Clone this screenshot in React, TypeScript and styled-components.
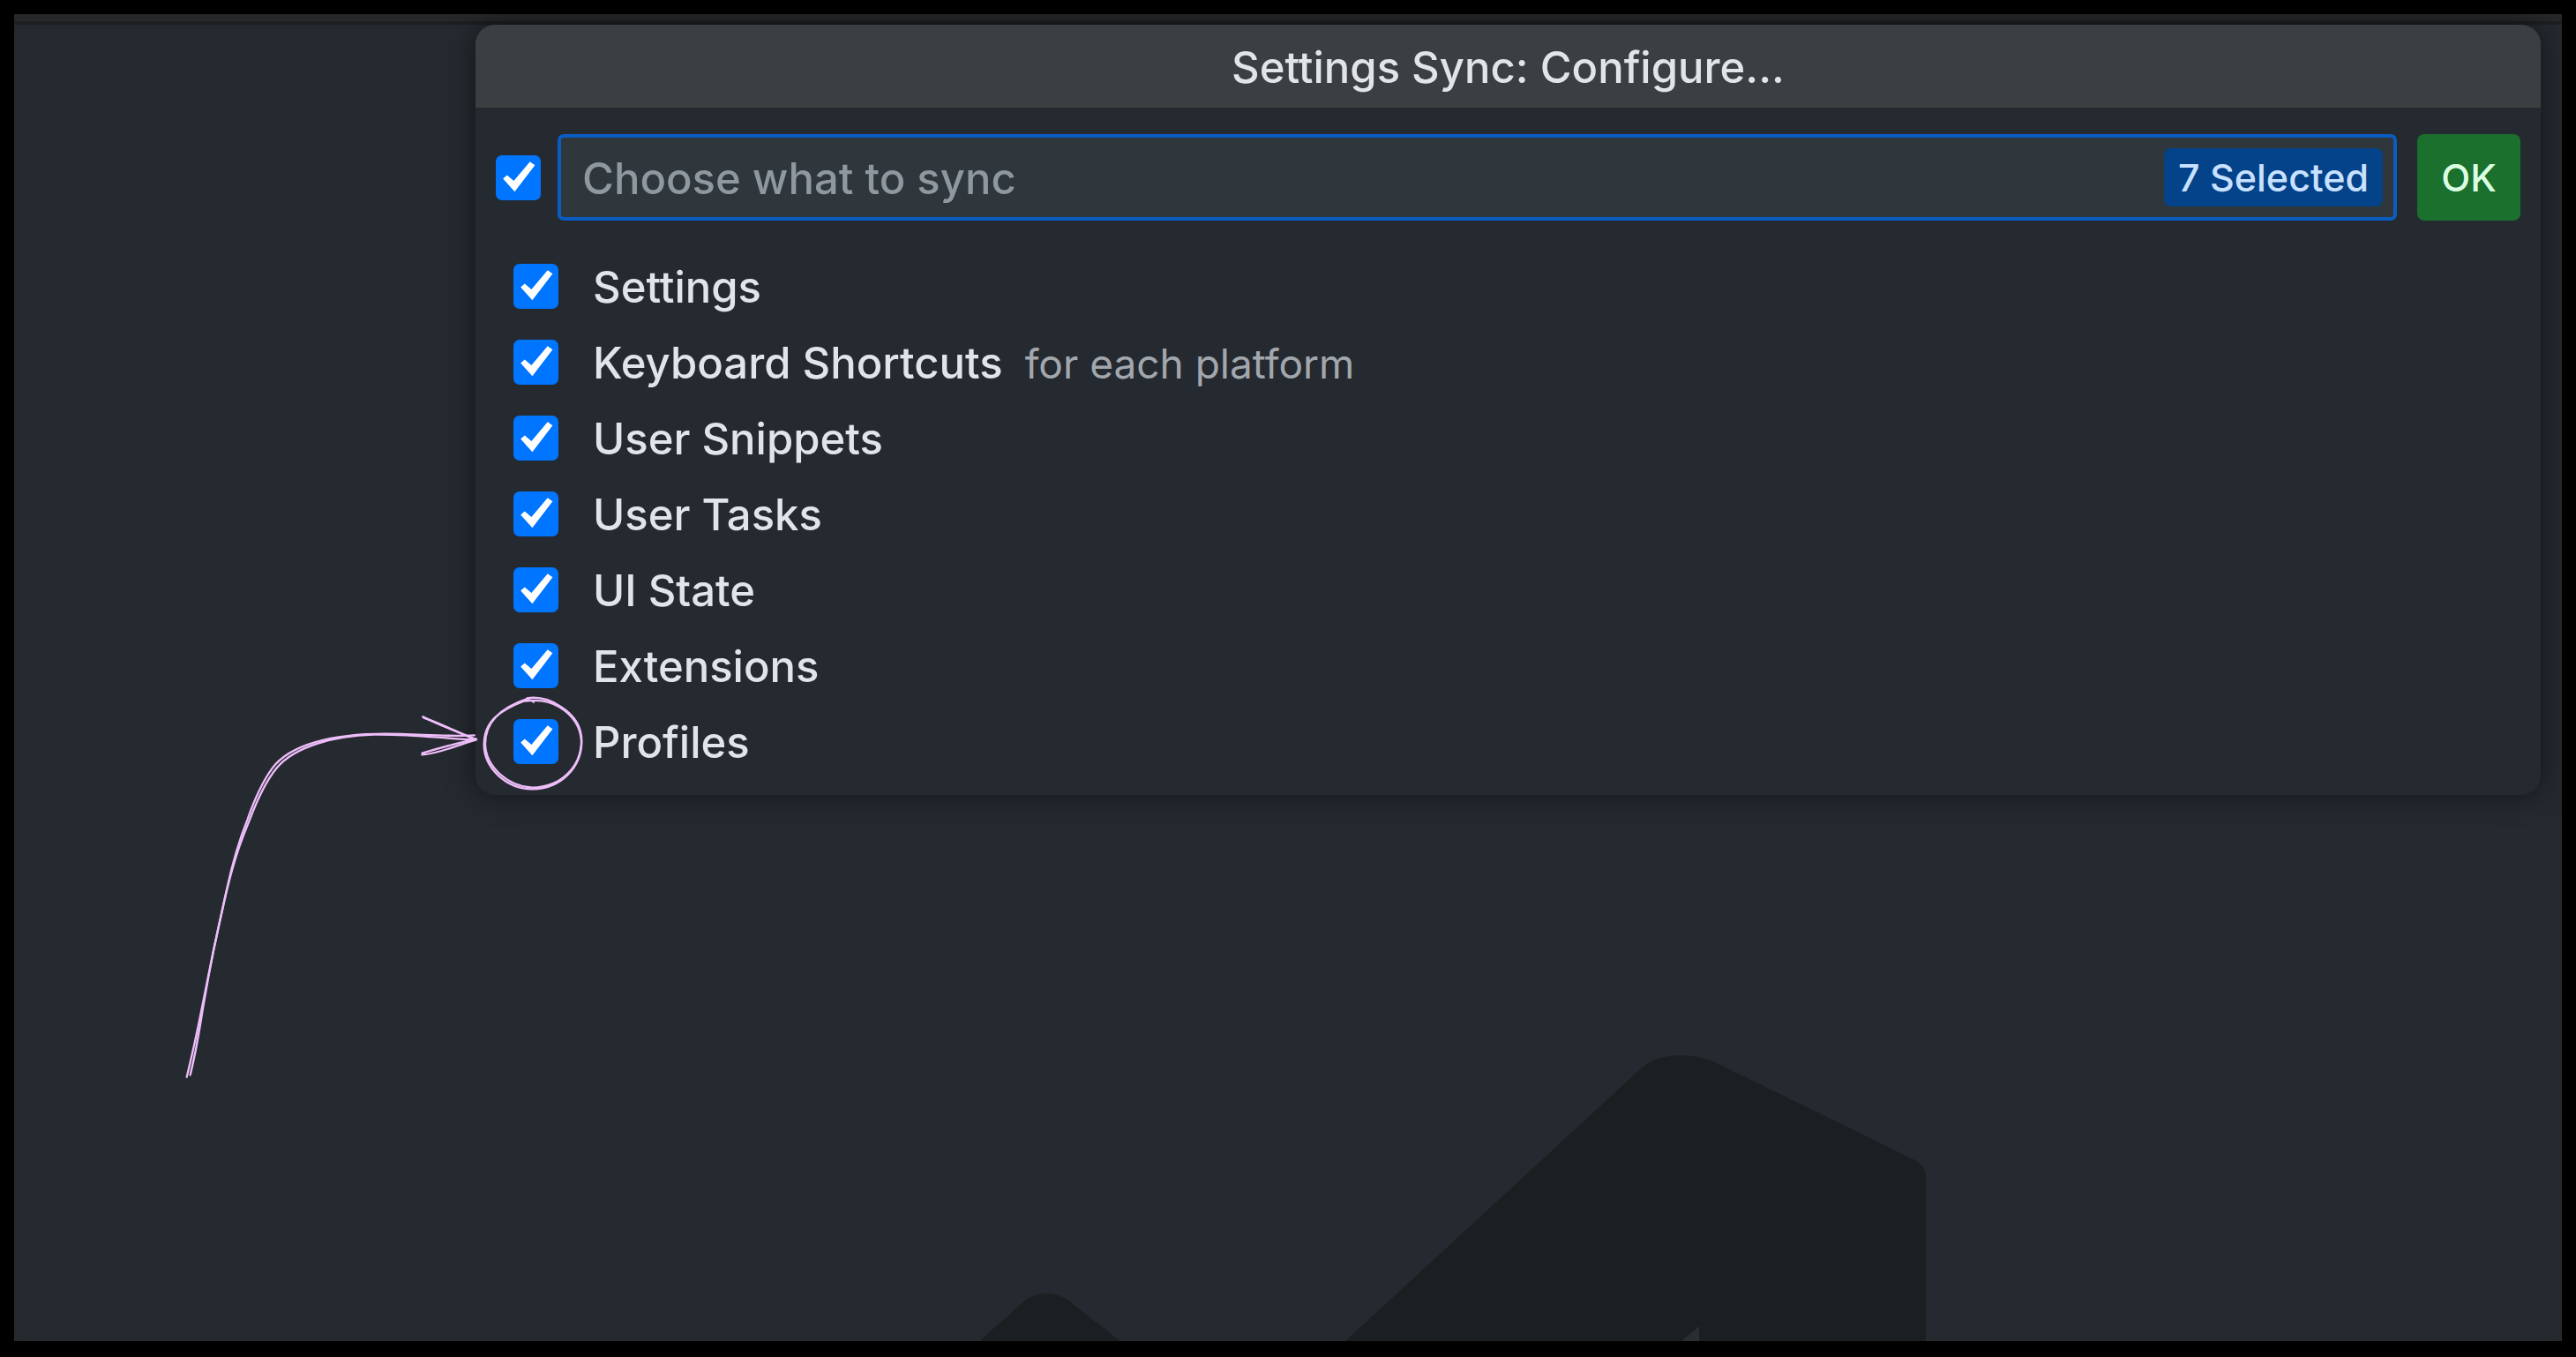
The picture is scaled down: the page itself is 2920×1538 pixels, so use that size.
import React, { useState } from "react";
import styled, { createGlobalStyle } from "styled-components";

const color = {
  editor: "#252a30",
  strip: "#262829",
  line: "#1c2023",
  title: "#3c3f41",
  text: "#e1e4e8",
  muted: "#a2a7ad",
  placeholder: "#8f979f",
  field: "#2f363c",
  focus: "#0a5cc2",
  badge: "#044289",
  badgeText: "#c8e1ff",
  button: "#1a702c",
  buttonText: "#dcffe4",
  accent: "#0075ff",
  ink: "#eebefa",
  watermark: "#1b1f21",
};

const GlobalStyle = createGlobalStyle`
  * { box-sizing: border-box; }
  body { margin: 0; background: #000; }
  body, input, button { font-family: Inter, "Liberation Sans", sans-serif; }
`;

const Frame = styled.main`
  position: relative;
  display: flex;
  flex-direction: column;
  min-height: 100vh;
  overflow: hidden;
  border: 16px solid #000;
  border-bottom-width: 18px;
  background: ${color.editor};
  box-shadow: inset 0 0 12px #292b2c;
`;

const TabStrip = styled.div`
  height: 12px;
  border-bottom: 4px solid ${color.line};
  background: ${color.strip};
`;

const Picker = styled.form`
  position: relative;
  margin: 0 24px 0 523px;
  padding-bottom: 18px;
  border-radius: 22px;
  background: ${color.editor};
  box-shadow: 0 0 32px rgba(0, 0, 0, 0.5);
  color: ${color.text};
`;

const Title = styled.h1`
  margin: 0;
  padding-top: 4px;
  border-radius: 22px 22px 0 0;
  background: ${color.title};
  font-size: 49px;
  font-weight: 500;
  line-height: 90px;
  text-align: center;
`;

const Header = styled.div`
  display: flex;
  align-items: center;
  padding: 30px 23px 31px;
`;

const Field = styled.div`
  display: flex;
  flex: 1;
  align-items: center;
  height: 98px;
  margin: 0 23px 0 19px;
  padding: 0 12px 0 24px;
  border: 4px solid ${color.focus};
  border-radius: 7px;
  background: ${color.field};
`;

const SearchInput = styled.input`
  flex: 1;
  min-width: 0;
  padding: 4px 0 0;
  border: 0;
  outline: 0;
  background: transparent;
  color: ${color.text};
  font-size: 49px;
  font-weight: 500;
  line-height: 64px;

  &::placeholder {
    color: ${color.placeholder};
    opacity: 1;
  }
`;

const CountBadge = styled.output`
  padding: 0 16px;
  border-radius: 8px;
  background: ${color.badge};
  color: ${color.badgeText};
  font-size: 43px;
  font-weight: 500;
  line-height: 66px;
  white-space: nowrap;
`;

const OkButton = styled.button`
  width: 117px;
  height: 98px;
  padding: 0;
  border: 0;
  border-radius: 8px;
  background: ${color.button};
  color: ${color.buttonText};
  font-size: 43px;
  font-weight: 500;
`;

const Checkbox = styled.input.attrs({ type: "checkbox" })`
  flex: none;
  width: 51px;
  height: 51px;
  margin: 0;
  border-radius: 7px;
  background: #fff;
  appearance: none;

  &:checked {
    background: ${color.accent};
  }

  &:checked::before {
    display: block;
    height: 100%;
    background: #fff;
    clip-path: polygon(16% 53%, 25% 45%, 40% 58%, 76% 15%, 87% 23%, 42% 82%);
    content: "";
  }
`;

const List = styled.ul`
  margin: 0;
  padding: 0 43px;
  list-style: none;
`;

const Row = styled.label`
  display: flex;
  align-items: center;
  height: 86px;
`;

const Name = styled.span`
  margin-left: 39px;
  padding-top: 2px;
  font-size: 49px;
  font-weight: 500;
`;

const Description = styled.span`
  margin-left: 25px;
  padding-top: 4px;
  color: ${color.muted};
  font-size: 46px;
`;

const Watermark = styled.svg`
  align-self: flex-end;
  width: 1071px;
  height: 324px;
  margin: auto 721px 0 0;
`;

const Annotation = styled.svg`
  position: absolute;
  top: 744px;
  left: 174px;
  width: 520px;
  height: 480px;
  fill: none;
  stroke: ${color.ink};
  stroke-width: 7;
  stroke-linecap: round;
  stroke-linejoin: round;
  pointer-events: none;
`;

interface SyncItem {
  label: string;
  description?: string;
}

const items: SyncItem[] = [
  { label: "Settings" },
  { label: "Keyboard Shortcuts", description: "for each platform" },
  { label: "User Snippets" },
  { label: "User Tasks" },
  { label: "UI State" },
  { label: "Extensions" },
  { label: "Profiles" },
];

export default function App() {
  const [selected, setSelected] = useState<string[]>(items.map((i) => i.label));
  const allSelected = selected.length === items.length;

  const toggle = (label: string) =>
    setSelected((now) =>
      now.includes(label) ? now.filter((l) => l !== label) : [...now, label]
    );

  return (
    <>
      <GlobalStyle />
      <Frame>
        <TabStrip />
        <Picker onSubmit={(e) => e.preventDefault()}>
          <Title>Settings Sync: Configure...</Title>
          <Header>
            <Checkbox
              aria-label="Toggle all"
              checked={allSelected}
              onChange={() => setSelected(allSelected ? [] : items.map((i) => i.label))}
            />
            <Field>
              <SearchInput aria-label="Choose what to sync" placeholder="Choose what to sync" />
              <CountBadge>{`${selected.length} Selected`}</CountBadge>
            </Field>
            <OkButton type="submit">OK</OkButton>
          </Header>
          <List>
            {items.map(({ label, description }) => (
              <li key={label}>
                <Row>
                  <Checkbox checked={selected.includes(label)} onChange={() => toggle(label)} />
                  <Name>{label}</Name>
                  {description && <Description>{description}</Description>}
                </Row>
              </li>
            ))}
          </List>
        </Picker>

        <Watermark viewBox="1112 1196 1071 324" aria-hidden="true">
          <path
            fill={color.watermark}
            d="M1525 1520 L1858 1213 Q1876 1196 1905 1196 Q1924 1196 1942 1203 L2171 1315 Q2183 1321 2183 1334 V1520 Z"
          />
          <path
            fill={color.watermark}
            d="M1110 1520 L1162 1474 Q1172 1466 1187 1466 Q1200 1466 1211 1474 L1270 1520 Z"
          />
          <path fill="#2a2e30" d="M1926 1503 V1520 H1906 Z" />
        </Watermark>

        <Annotation viewBox="0 0 1560 1440" aria-hidden="true">
          <path d="M65 1382 C95 1260 108 1190 120 1130 C148 985 168 890 202 740 C228 620 250 560 272 505 C300 425 325 375 356 332 C415 252 560 215 740 215 C850 215 950 226 1043 220" />
          <path d="M77 1375 C105 1260 112 1190 125 1120 C147 990 170 880 202 745 C232 620 258 560 280 505 C312 420 342 366 372 330 C435 256 570 222 700 218 C830 215 940 232 1048 235" />
          <path d="M868 157 C920 183 975 205 1050 234" />
          <path d="M871 161 C925 178 975 205 1035 230" />
          <path d="M866 281 C930 262 990 245 1050 233" />
          <path d="M865 286 C920 284 980 255 1048 236" />
          <path d="M1222 94 C1262 88 1300 98 1336 122 C1384 152 1408 192 1408 240 C1408 330 1336 403 1240 403 C1150 402 1076 330 1076 252 C1076 172 1128 136 1216 102 C1230 98 1240 102 1245 107" />
          <path d="M1216 104 C1256 98 1292 100 1332 124 C1378 152 1404 190 1407 240 C1406 326 1340 396 1240 398 C1160 394 1082 330 1080 250 C1080 180 1126 128 1222 96" />
        </Annotation>
      </Frame>
    </>
  );
}
